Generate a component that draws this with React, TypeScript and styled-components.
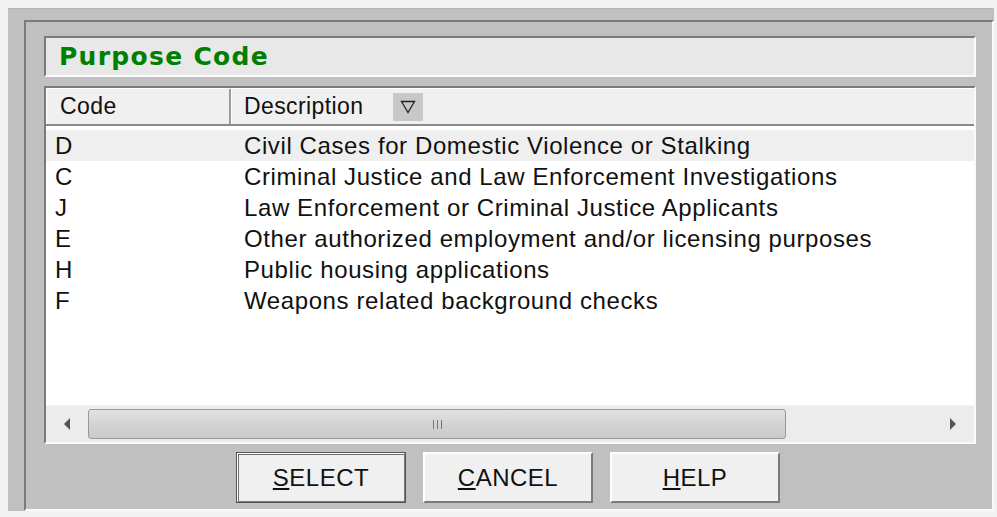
import React from 'react'
import styled, {createGlobalStyle} from 'styled-components'

const GlobalStyle = createGlobalStyle`
  html, body {
    margin: 0;
    padding: 0;
    background: #f2f2f2;
  }
  body {
    font-family: "Liberation Sans", Arial, sans-serif;
  }
`

type Purpose = { code: string, description: string }

const purposes: Purpose[] = [
  {code: 'D', description: 'Civil Cases for Domestic Violence or Stalking'},
  {code: 'C', description: 'Criminal Justice and Law Enforcement Investigations'},
  {code: 'J', description: 'Law Enforcement or Criminal Justice Applicants'},
  {code: 'E', description: 'Other authorized employment and/or licensing purposes'},
  {code: 'H', description: 'Public housing applications'},
  {code: 'F', description: 'Weapons related background checks'},
]

export default function App() {
  return (
    <>
      <GlobalStyle/>
      <Window>
        <Frame>
          <TitleBox>Purpose Code</TitleBox>

          <Grid>
            <HeaderRow>
              <HeaderCell $width={185}>Code</HeaderCell>
              <HeaderCell>
                Description
                <SortButton>
                  <svg width="16" height="14" viewBox="0 0 16 14">
                    <path d="M1.5 1.5 H14.5 L8 12.5 Z" fill="none" stroke="#222" strokeWidth="1.3"/>
                  </svg>
                </SortButton>
              </HeaderCell>
            </HeaderRow>

            <Rows>
              {purposes.map((p, i) => (
                <Row key={p.code} $selected={i === 0}>
                  <CodeCell>{p.code}</CodeCell>
                  <DescCell>{p.description}</DescCell>
                </Row>
              ))}
            </Rows>

            <ScrollBar>
              <Arrow>
                <svg width="8" height="12" viewBox="0 0 8 12">
                  <path d="M7 0 L1 6 L7 12 Z" fill="#555"/>
                </svg>
              </Arrow>
              <Track>
                <Thumb>
                  <Grip/>
                  <Grip/>
                  <Grip/>
                </Thumb>
              </Track>
              <Arrow>
                <svg width="8" height="12" viewBox="0 0 8 12">
                  <path d="M1 0 L7 6 L1 12 Z" fill="#555"/>
                </svg>
              </Arrow>
            </ScrollBar>
          </Grid>

          <ButtonRow>
            <Button $default><u>S</u>ELECT</Button>
            <Button><u>C</u>ANCEL</Button>
            <Button><u>H</u>ELP</Button>
          </ButtonRow>
        </Frame>
      </Window>
    </>
  )
}

const Window = styled.div`
  margin: 8px 3px 0 8px;
  height: 503px;
  box-sizing: border-box;
  background: #c0c0c0;
  border-top: 1px solid #b4b4b4;
  padding: 11px 0 0 16px;
  display: flex;
`

const Frame = styled.div`
  flex: 1;
  box-sizing: border-box;
  border-top: 2px solid #7a7a7a;
  border-left: 2px solid #7a7a7a;
  border-right: 2px solid #fafafa;
  border-bottom: 2px solid #fafafa;
  padding: 14px 16px 0 18px;
  display: flex;
  flex-direction: column;
`

const Sunken = styled.div`
  box-sizing: border-box;
  border-top: 2px solid #7a7a7a;
  border-left: 2px solid #7a7a7a;
  border-right: 2px solid #fafafa;
  border-bottom: 2px solid #fafafa;
`

const TitleBox = styled(Sunken)`
  height: 41px;
  background: #e8e8e8;
  padding-left: 13px;
  display: flex;
  align-items: center;
  font-family: "DejaVu Sans", Verdana, sans-serif;
  font-weight: bold;
  font-size: 25px;
  letter-spacing: 1.3px;
  color: #008000;
`

const Grid = styled(Sunken)`
  margin-top: 9px;
  height: 358px;
  background: #ffffff;
  display: flex;
  flex-direction: column;
`

const HeaderRow = styled.div`
  display: flex;
  height: 38px;
  background: #f0f0f0;
  border-top: 1px solid #fff;
  border-bottom: 2px solid #8a8a8a;
  box-sizing: border-box;
`

const HeaderCell = styled.div<{ $width?: number }>`
  ${p => p.$width ? `width: ${p.$width}px;` : 'flex: 1;'}
  box-sizing: border-box;
  display: flex;
  align-items: center;
  padding-left: ${p => p.$width ? 13 : 12}px;
  font-size: 23px;
  letter-spacing: 0.4px;
  color: #111;
  border-left: 1px solid #fff;
  border-right: ${p => p.$width ? '2px solid #9a9a9a' : 'none'};
`

const SortButton = styled.div`
  margin-left: 30px;
  width: 30px;
  height: 28px;
  background: #c8c8c8;
  display: flex;
  align-items: center;
  justify-content: center;
`

const Rows = styled.div`
  flex: 1;
  padding-top: 4px;
`

const Row = styled.div<{ $selected?: boolean }>`
  display: flex;
  height: 31px;
  align-items: center;
  background: ${p => p.$selected ? '#efefef' : 'transparent'};
  font-size: 24px;
  letter-spacing: 0.6px;
  color: #111;
`

const CodeCell = styled.div`
  width: 198px;
  padding-left: 9px;
  box-sizing: border-box;
`

const DescCell = styled.div`
  flex: 1;
`

const ScrollBar = styled.div`
  height: 36px;
  display: flex;
  align-items: center;
  background: #ececec;
  border-top: 1px solid #f6f6f6;
`

const Arrow = styled.div`
  width: 42px;
  display: flex;
  justify-content: center;
`

const Track = styled.div`
  flex: 1;
  padding-right: 146px;
  display: flex;
`

const Thumb = styled.div`
  flex: 1;
  height: 30px;
  box-sizing: border-box;
  border: 1px solid #999;
  border-radius: 3px;
  background: linear-gradient(#e2e2e2, #d2d2d2 55%, #cbcbcb);
  display: flex;
  align-items: center;
  justify-content: center;
  gap: 3px;
`

const Grip = styled.span`
  width: 1px;
  height: 9px;
  background: #777;
`

const ButtonRow = styled.div`
  display: flex;
  justify-content: center;
  gap: 17px;
  margin-top: 8px;
  padding-right: 4px;
`

const Button = styled.button<{ $default?: boolean }>`
  width: 170px;
  height: 51px;
  box-sizing: border-box;
  background: #f0f0f0;
  font-family: "Liberation Sans", Arial, sans-serif;
  font-size: 24px;
  letter-spacing: 0.5px;
  color: #111;
  padding: 0;
  border-top: 2px solid #fff;
  border-left: 2px solid #fff;
  border-right: 2px solid #7a7a7a;
  border-bottom: 2px solid #7a7a7a;
  outline: ${p => p.$default ? '1px solid #555' : 'none'};
  outline-offset: -1px;
  box-shadow: ${p => p.$default ? 'inset 1px 1px 0 #6a6a6a' : 'none'};
`
